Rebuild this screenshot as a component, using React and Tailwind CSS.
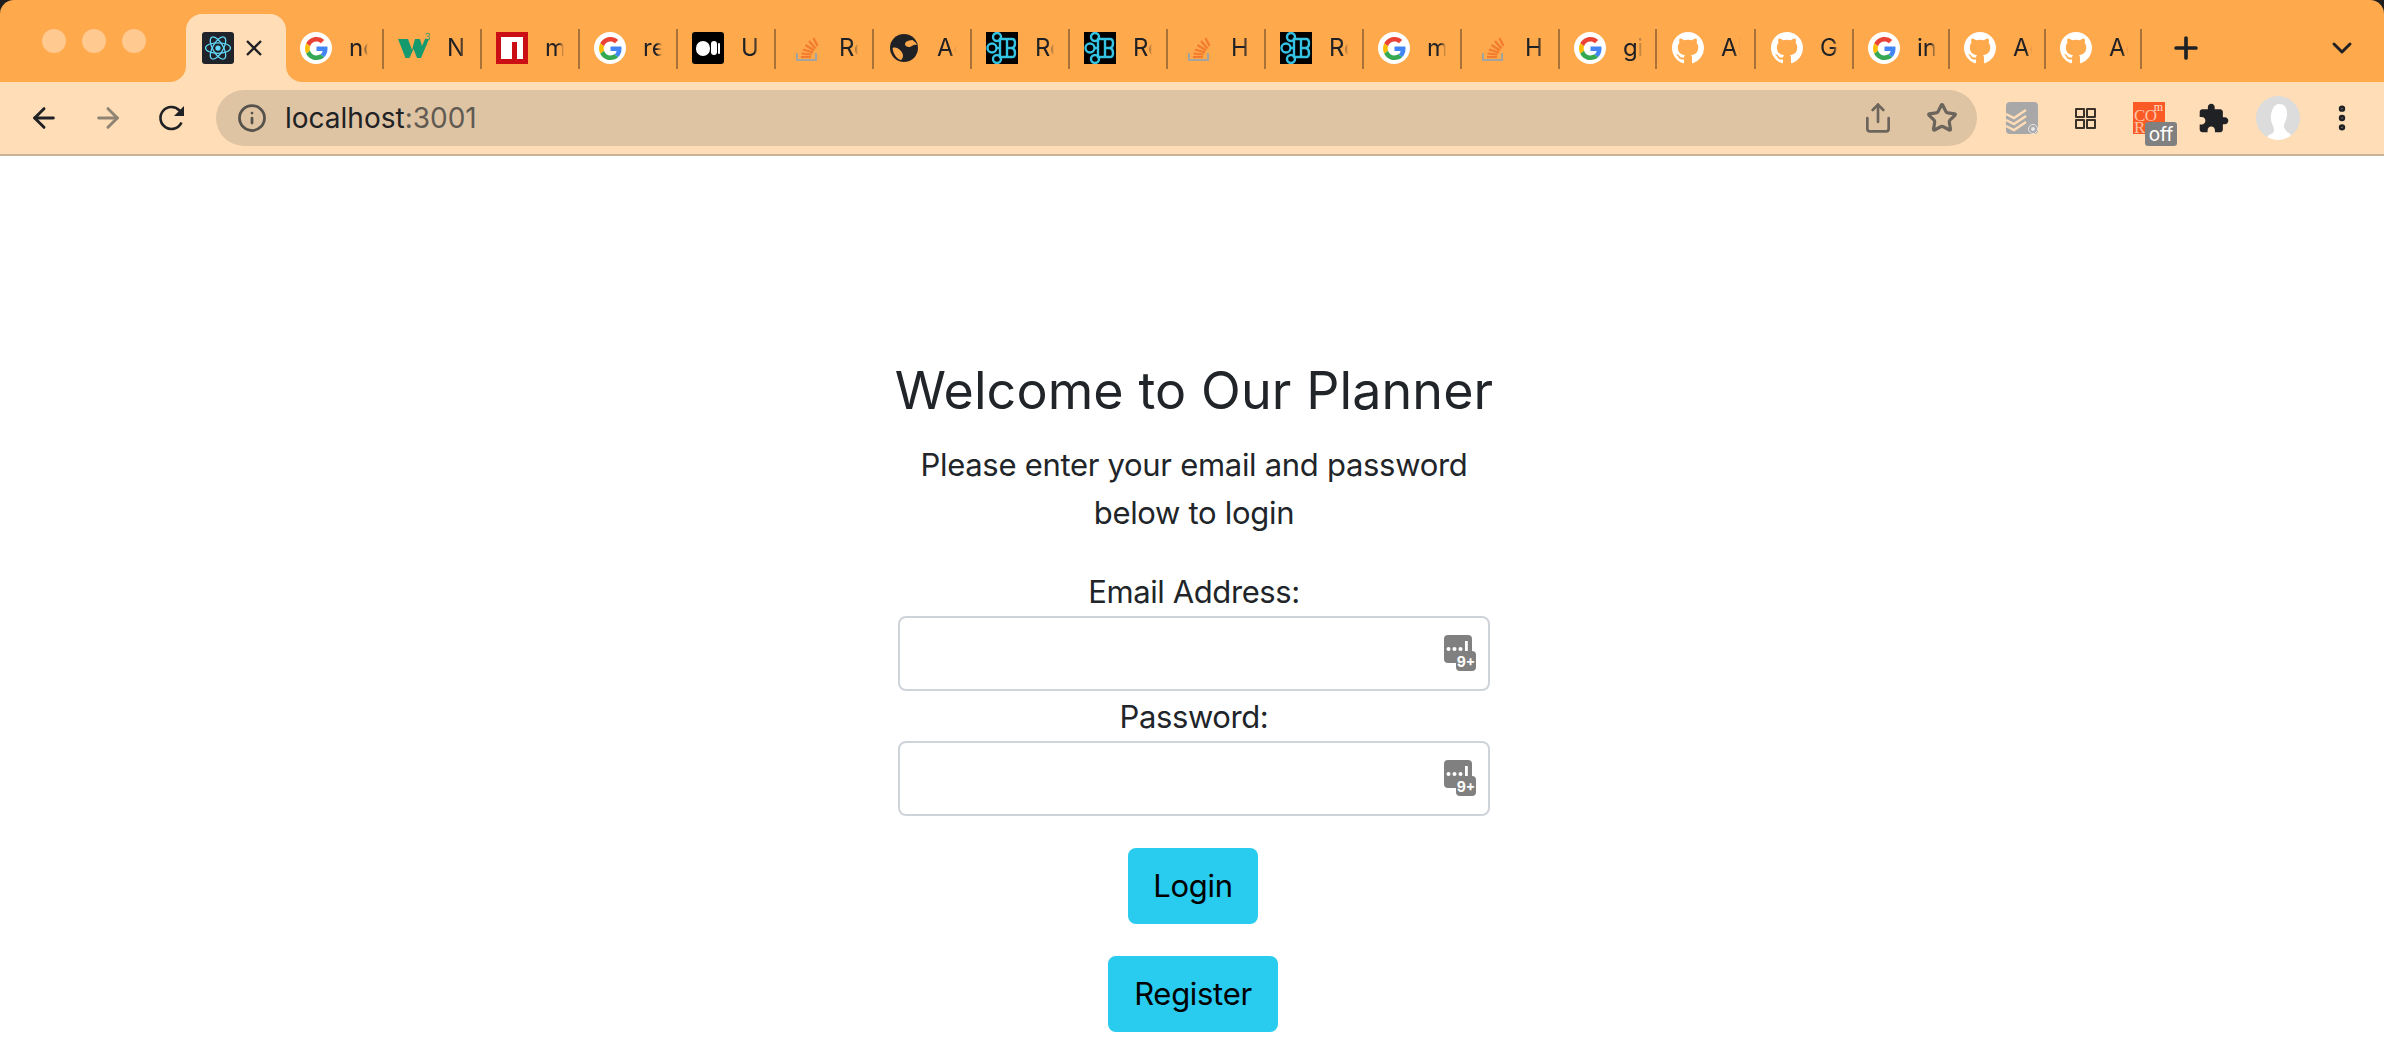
import React from 'react';
import { ArrowLeft, ArrowRight, ChevronDown, Info, MoreVertical, Plus, Share, Star } from 'lucide-react';

const GoogleIcon = () => (
  <div className="w-8 h-8 rounded-full bg-white flex items-center justify-center">
    <svg viewBox="0 0 48 48" className="w-[23px] h-[23px]">
      <path fill="#EA4335" d="M24 9.5c3.54 0 6.71 1.22 9.21 3.6l6.85-6.85C35.9 2.38 30.47 0 24 0 14.62 0 6.51 5.38 2.56 13.22l7.98 6.19C12.43 13.72 17.74 9.5 24 9.5z" />
      <path fill="#4285F4" d="M46.98 24.55c0-1.57-.15-3.09-.38-4.55H24v9.02h12.94c-.58 2.96-2.26 5.48-4.78 7.18l7.73 6c4.51-4.18 7.09-10.36 7.09-17.65z" />
      <path fill="#FBBC05" d="M10.53 28.59c-.48-1.45-.76-2.99-.76-4.59s.27-3.14.76-4.59l-7.98-6.19C.92 16.46 0 20.12 0 24c0 3.88.92 7.54 2.56 10.78l7.97-6.19z" />
      <path fill="#34A853" d="M24 48c6.48 0 11.93-2.13 15.89-5.81l-7.73-6c-2.15 1.45-4.92 2.3-8.16 2.3-6.26 0-11.57-4.22-13.47-9.91l-7.98 6.19C6.51 42.62 14.62 48 24 48z" />
    </svg>
  </div>
);

const W3Icon = () => (
  <svg viewBox="0 0 32 32" className="w-8 h-8">
    <polygon fill="#159a6e" points="0,7 10,7 14,18 17,7 22,7 24,14 27,7 31,7 23,26 19,26 15.5,17 11.5,26 7.5,26" />
    <text x="26.5" y="8" fontSize="9.5" fill="#159a6e" fontFamily="Inter, sans-serif">3</text>
  </svg>
);

const NpmIcon = () => (
  <div className="w-8 h-8 bg-[#cb0f14] flex items-start justify-center pt-[5px]">
    <div className="w-[22px] h-[22px] bg-white flex items-start justify-center pt-[5px] pl-[4px]">
      <div className="w-[5px] h-[17px] bg-[#cb0f14]" />
    </div>
  </div>
);

const MediumIcon = () => (
  <div className="w-8 h-8 rounded-[3px] bg-black flex items-center justify-center gap-[1px]">
    <div className="w-[14px] h-[15px] rounded-full bg-white" />
    <div className="w-[6px] h-[14px] rounded-full bg-white" />
    <div className="w-[2px] h-[11px] rounded-full bg-white" />
  </div>
);

const StackIcon = () => (
  <svg viewBox="0 0 32 32" className="w-8 h-8">
    <path d="M7 21v7h19v-7" fill="none" stroke="#a3a3a0" strokeWidth="2" />
    <g stroke="#f27b2e" strokeWidth="2.2">
      <path d="M11 25h10" />
      <path d="M11.5 21.5l10 1" />
      <path d="M13 17.5l10 3" />
      <path d="M15.5 13l8.5 5.5" />
      <path d="M19 9l6.5 7.5" />
      <path d="M23.5 6l4 8" />
    </g>
  </svg>
);

const GlobeIcon = () => (
  <div className="w-8 h-8 flex items-center justify-center">
    <svg viewBox="0 0 28 28" className="w-7 h-7">
      <circle cx="14" cy="14" r="14" fill="#202124" />
      <path fill="#ffa94d" d="M2.5 14c3-1 5.500 0 7.500 2 2 2 3 4 3 6 0 1.500-1 3-2 4-4-1-7.500-5-8.500-12z" />
      <path fill="#ffa94d" d="M27 11c-2-.5-4 0-6 1.500-2 1-4 .5-5.500-1-1-1.200-.5-3 1-4 1.500-1 4-1 6-1.500 2 1.500 4 3 4.500 5z" />
    </svg>
  </div>
);

const ReactBootstrapIcon = () => (
  <div className="w-8 h-8 bg-black">
    <svg viewBox="0 0 32 32" className="w-8 h-8">
      <g fill="none" stroke="#35c3e4" strokeWidth="2.4">
        <circle cx="11" cy="5" r="4" />
        <circle cx="11" cy="27" r="4" />
        <circle cx="6" cy="16" r="4.500" />
        <path d="M14 7h12c4 0 4 8 0 9 4 1 4 9 0 9H14z" />
        <path d="M21 7v18M21 16h5" />
        <path d="M10 16h4" />
      </g>
    </svg>
  </div>
);

const GithubIcon = () => (
  <svg viewBox="0 0 16 16" className="w-8 h-8">
    <path fill="#fff" fillRule="evenodd" d="M8 0C3.58 0 0 3.58 0 8c0 3.54 2.29 6.53 5.47 7.59.4.07.55-.17.55-.38 0-.19-.01-.82-.01-1.49-2.01.37-2.53-.49-2.69-.94-.09-.23-.48-.94-.82-1.13-.28-.15-.68-.52-.01-.53.63-.01 1.08.58 1.23.82.72 1.21 1.87.87 2.33.66.07-.52.28-.87.51-1.07-1.78-.2-3.64-.89-3.64-3.95 0-.87.31-1.59.82-2.15-.08-.2-.36-1.02.08-2.12 0 0 .67-.21 2.2.82.64-.18 1.32-.27 2-.27.68 0 1.36.09 2 .27 1.53-1.04 2.2-.82 2.2-.82.44 1.1.16 1.92.08 2.12.51.56.82 1.27.82 2.15 0 3.07-1.87 3.75-3.65 3.95.29.25.54.73.54 1.48 0 1.07-.01 1.93-.01 2.2 0 .21.15.46.55.38A8.013 8.013 0 0016 8c0-4.42-3.58-8-8-8z" />
  </svg>
);

const ReactIcon = () => (
  <div className="w-8 h-8 rounded-[3px] bg-[#20232a] flex items-center justify-center">
    <svg viewBox="-12 -12 24 24" className="w-[30px] h-[30px]">
      <circle r="2.1" fill="#61dafb" />
      <g fill="none" stroke="#61dafb" strokeWidth="1">
        <ellipse rx="10" ry="4.2" />
        <ellipse rx="10" ry="4.2" transform="rotate(60)" />
        <ellipse rx="10" ry="4.2" transform="rotate(120)" />
      </g>
    </svg>
  </div>
);

const TABS = [
  { icon: GoogleIcon, title: 'nod', width: 'w-[97px]', pad: 'pl-[13px]' },
  { icon: W3Icon, title: 'Ne', width: 'w-[98px]', pad: 'pl-[14px]' },
  { icon: NpmIcon, title: 'mo', width: 'w-[98px]', pad: 'pl-[14px]' },
  { icon: GoogleIcon, title: 're', width: 'w-[98px]', pad: 'pl-[14px]' },
  { icon: MediumIcon, title: 'Us', width: 'w-[98px]', pad: 'pl-[14px]' },
  { icon: StackIcon, title: 'Re', width: 'w-[98px]', pad: 'pl-[14px]' },
  { icon: GlobeIcon, title: 'Ac', width: 'w-[98px]', pad: 'pl-[14px]' },
  { icon: ReactBootstrapIcon, title: 'Re', width: 'w-[98px]', pad: 'pl-[14px]' },
  { icon: ReactBootstrapIcon, title: 'Re', width: 'w-[98px]', pad: 'pl-[14px]' },
  { icon: StackIcon, title: 'Ho', width: 'w-[98px]', pad: 'pl-[14px]' },
  { icon: ReactBootstrapIcon, title: 'Re', width: 'w-[98px]', pad: 'pl-[14px]' },
  { icon: GoogleIcon, title: 'ma', width: 'w-[98px]', pad: 'pl-[14px]' },
  { icon: StackIcon, title: 'Ho', width: 'w-[98px]', pad: 'pl-[14px]' },
  { icon: GoogleIcon, title: 'gi', width: 'w-[97px]', pad: 'pl-[14px]' },
  { icon: GithubIcon, title: 'Al', width: 'w-[99px]', pad: 'pl-[15px]' },
  { icon: GithubIcon, title: 'Ge', width: 'w-[98px]', pad: 'pl-[15px]' },
  { icon: GoogleIcon, title: 'in', width: 'w-[96px]', pad: 'pl-[14px]' },
  { icon: GithubIcon, title: 'Ac', width: 'w-[96px]', pad: 'pl-[14px]' },
  { icon: GithubIcon, title: 'Ac', width: 'w-[96px]', pad: 'pl-[14px]' },
];

const ReloadIcon = () => (
  <svg viewBox="0 0 32 32" className="w-8 h-8" fill="none">
    <path d="M25.500 20.500A11 11 0 1 1 23.500 8.500L26 11" stroke="#202124" strokeWidth="2.6" />
    <polygon points="28,4 28,14 18,14" fill="#202124" />
  </svg>
);

const TodoistIcon = () => (
  <div className="relative w-8 h-8 rounded-[4px] bg-[#a8a8a8]">
    <svg viewBox="0 0 32 32" className="w-8 h-8" fill="none" stroke="#ffddb6" strokeWidth="2.4">
      <path d="M0 12l8 4 12-8" />
      <path d="M0 18l8 4 12-8" />
      <path d="M0 24l8 4 12-8" />
    </svg>
    <div className="absolute right-[1px] bottom-[1px] w-[8px] h-[8px] rounded-full bg-[#e8e8e8] border-2 border-[#a8a8a8] outline outline-1 outline-[#e8e8e8]" />
  </div>
);

const TabGridIcon = () => (
  <div className="grid grid-cols-2 gap-[1px]">
    {[0, 1, 2, 3].map(i => (
      <div key={i} className="w-[10px] h-[10px] border-2 border-[#3a3128] rounded-[1px]" />
    ))}
  </div>
);

const CorsIcon = () => (
  <div className="relative w-11 h-11">
    <div className="relative w-8 h-8 bg-[#fb5a25] overflow-hidden" style={{ fontFamily: "'Liberation Serif', serif" }}>
      <span className="absolute left-[1px] top-[8px] text-[17px] leading-[12px] tracking-[-0.5px] text-[#ffc4a8]">CO</span>
      <span className="absolute left-[1px] top-[20px] text-[17px] leading-[12px] text-[#ffc4a8]">R</span>
      <span className="absolute right-[2px] -top-[1px] text-[12px] leading-[12px] text-[#ffe0d0]">m</span>
    </div>
    <div className="absolute left-3 top-5 w-8 h-6 rounded-[3px] bg-[#808080] flex items-center justify-center text-[19px] leading-none text-white">off</div>
  </div>
);

const PuzzleIcon = () => (
  <svg viewBox="1.500 0.500 22 22" className="w-[30px] h-[30px]" fill="#202124">
    <path d="M20.500 11H19V7c0-1.100-.9-2-2-2h-4V3.500C13 2.120 11.880 1 10.500 1S8 2.120 8 3.500V5H4c-1.100 0-1.990.9-1.990 2v3.800H3.500c1.490 0 2.700 1.210 2.700 2.700s-1.210 2.700-2.700 2.700H2V20c0 1.100.9 2 2 2h3.800v-1.500c0-1.490 1.210-2.700 2.700-2.700 1.490 0 2.700 1.210 2.700 2.700V22H17c1.100 0 2-.9 2-2v-4h1.500c1.380 0 2.500-1.120 2.500-2.500S21.880 11 20.500 11z" />
  </svg>
);

const AvatarIcon = () => (
  <div className="w-11 h-11 rounded-full bg-[#dcdcdc] overflow-hidden">
    <svg viewBox="0 0 44 44" className="w-11 h-11">
      <path fill="#fff" d="M23 8c5 0 8 3 8 9 0 6-2 9-3 12-.5 2 1 6 5 8 2 1 2 3 2 7H11c0-3 1-5 3-5.500 3-1 4-2 4-5 0-2-2-5-3-9-1-9 3-16.500 8-16.500z" />
    </svg>
  </div>
);

const KeyBadge = () => (
  <svg viewBox="0 0 32 36" className="absolute right-[14px] top-[19px] w-8 h-9">
    <rect x="0" y="0" width="28" height="28" rx="4" fill="#808080" />
    <rect x="12" y="16" width="20" height="20" rx="4" fill="#808080" />
    <g fill="#fff">
      <circle cx="4.500" cy="14" r="2" />
      <circle cx="10.500" cy="14" r="2" />
      <circle cx="16.500" cy="14" r="2" />
      <rect x="21" y="6" width="2.800" height="10" />
    </g>
    <text x="22" y="32" textAnchor="middle" fontSize="14" fontWeight="700" fill="#fff" fontFamily="Inter, sans-serif">9+</text>
  </svg>
);

const Field = ({ label, top }) => (
  <div className={`w-full ${top}`}>
    <label className="block text-center text-[31px] leading-[48px] tracking-[-0.4px]">{label}</label>
    <div className="relative">
      <input className="block w-full h-[75px] rounded-[8px] border-2 border-[#ced4da] bg-white outline-none" />
      <KeyBadge />
    </div>
  </div>
);

export default function App() {
  return (
    <div className="w-[2384px] h-[1042px] overflow-hidden bg-white text-[#212529]" style={{ fontFamily: "Inter, 'Liberation Sans', sans-serif" }}>

      {/* tab strip */}
      <div className="bg-[#1e1e1e]">
        <div className="h-[82px] flex rounded-t-[14px] bg-[#ffa94d]">
          <div className="w-[186px] flex items-center gap-4 pl-[42px]">
            <div className="w-6 h-6 rounded-full bg-[#ffc98f]" />
            <div className="w-6 h-6 rounded-full bg-[#ffc98f]" />
            <div className="w-6 h-6 rounded-full bg-[#ffc98f]" />
          </div>

          <div className="relative w-[100px] h-[68px] self-end rounded-t-[16px] bg-[#ffddb6] pt-[18px] pl-4 flex items-start">
            <ReactIcon />
            <svg viewBox="0 0 16 16" className="w-4 h-4 ml-3 mt-2" fill="none" stroke="#202124" strokeWidth="2.4">
              <path d="M1 1l14 14M15 1L1 15" />
            </svg>
            <div className="absolute -left-4 bottom-0 w-4 h-4 bg-[#ffddb6]">
              <div className="w-4 h-4 rounded-br-[16px] bg-[#ffa94d]" />
            </div>
            <div className="absolute -right-4 bottom-0 w-4 h-4 bg-[#ffddb6]">
              <div className="w-4 h-4 rounded-bl-[16px] bg-[#ffa94d]" />
            </div>
          </div>

          <div className="flex mt-[29px] h-10 ml-[1px]">
            {TABS.map((t, i) => (
              <div key={i} className={`${t.width} ${t.pad} h-10 flex items-start pt-[3px] border-r-2 border-[#a87238]`}>
                <t.icon />
                <span className="ml-[17px] w-[19px] h-8 overflow-hidden whitespace-nowrap text-[24px] leading-[32px] text-[#202124] [mask-image:linear-gradient(to_right,black_70%,transparent)]">{t.title}</span>
              </div>
            ))}
          </div>

          <Plus className="w-[34px] h-[34px] ml-[27px] mt-[31px] text-[#202124]" strokeWidth={2.6} />
          <ChevronDown className="w-8 h-8 ml-[123px] mt-[32px] text-[#202124]" strokeWidth={2.2} />
        </div>
      </div>

      {/* toolbar */}
      <div className="h-[74px] flex items-start pt-2 bg-[#ffddb6] border-b-2 border-[#c9b397]">
        <div className="w-[216px] h-14 flex items-center pl-7 gap-8">
          <ArrowLeft className="w-8 h-8 text-[#202124]" strokeWidth={2.2} />
          <ArrowRight className="w-8 h-8 text-[#8f8474]" strokeWidth={2.2} />
          <ReloadIcon />
        </div>

        <div className="w-[1761px] h-14 rounded-full bg-[#dfc4a3] flex items-center pl-[21px]">
          <Info className="w-[30px] h-[30px] text-[#55514b]" strokeWidth={2.2} />
          <span className="ml-[18px] text-[28px] leading-none text-[#202124]">localhost<span className="text-[#5f5a52]">:3001</span></span>
          <Share className="w-8 h-8 ml-auto text-[#6b655c]" strokeWidth={2} />
          <Star className="w-8 h-8 ml-8 mr-[19px] text-[#6b655c]" strokeWidth={2.4} />
        </div>

        <div className="h-14 flex items-center">
          <div className="ml-[29px]"><TodoistIcon /></div>
          <div className="ml-[37px]"><TabGridIcon /></div>
          <div className="ml-[37px] mt-[12px]"><CorsIcon /></div>
          <div className="ml-[22px]"><PuzzleIcon /></div>
          <div className="ml-[27px]"><AvatarIcon /></div>
          <MoreVertical className="w-8 h-8 ml-[26px] text-[#202124]" strokeWidth={2.8} />
        </div>
      </div>

      {/* login form */}
      <main className="w-[592px] ml-[898px] pt-[204px] flex flex-col items-center text-center">
        <h1 className="text-[52px] leading-[62px] font-normal tracking-[0.1px] whitespace-nowrap">Welcome to Our Planner</h1>
        <p className="mt-[19px] text-[31px] leading-[48px] tracking-[-0.3px]">Please enter your email and password<br />below to login</p>
        <Field label="Email Address:" top="mt-[31px]" />
        <Field label="Password:" top="mt-[2px]" />
        <button className="mt-[32px] h-[76px] w-[130px] -translate-x-[1px] rounded-[8px] bg-[#29cbef] text-[31px] tracking-[-0.3px] text-black">Login</button>
        <button className="mt-[32px] h-[76px] w-[170px] -translate-x-[1px] rounded-[8px] bg-[#29cbef] text-[31px] tracking-[-0.3px] text-black">Register</button>
      </main>
    </div>
  );
}
